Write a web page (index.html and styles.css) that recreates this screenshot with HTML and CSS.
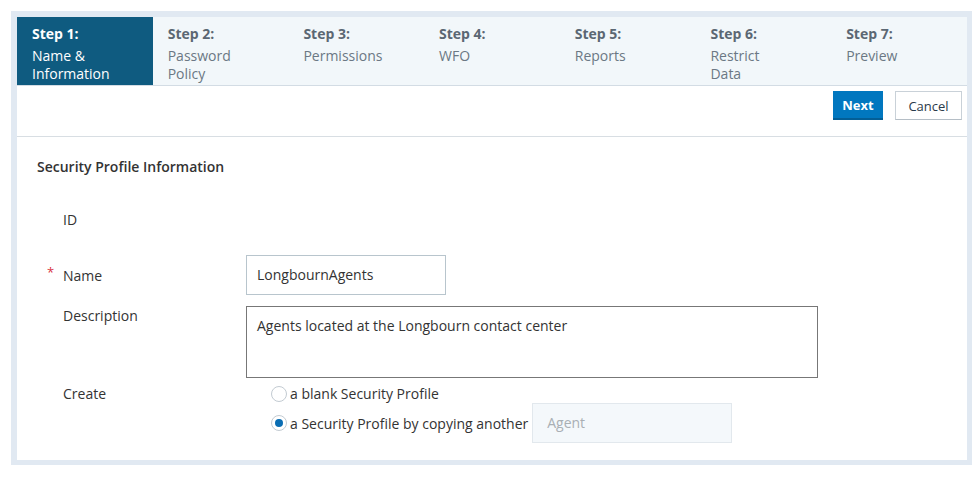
FILE: index.html
```html
<!DOCTYPE html>
<html>
<head>
<meta charset="utf-8">
<link rel="stylesheet" href="styles.css">
</head>
<body>
<div class="frame">
  <div class="steps">
    <div class="step active"><b>Step 1:</b><span>Name &amp; Information</span></div>
    <div class="step"><b>Step 2:</b><span>Password Policy</span></div>
    <div class="step"><b>Step 3:</b><span>Permissions</span></div>
    <div class="step"><b>Step 4:</b><span>WFO</span></div>
    <div class="step"><b>Step 5:</b><span>Reports</span></div>
    <div class="step"><b>Step 6:</b><span>Restrict Data</span></div>
    <div class="step"><b>Step 7:</b><span>Preview</span></div>
  </div>
  <div class="actions">
    <button class="btn primary">Next</button>
    <button class="btn">Cancel</button>
  </div>
  <div class="form">
    <h2 class="title">Security Profile Information</h2>
    <div class="row row-id"><div class="label">ID</div><div class="field"></div></div>
    <div class="row row-name"><div class="label"><span class="req">*</span>Name</div><div class="field"><div class="input">LongbournAgents</div></div></div>
    <div class="row row-desc"><div class="label">Description</div><div class="field"><div class="textarea">Agents located at the Longbourn contact center</div></div></div>
    <div class="row row-create"><div class="label">Create</div>
      <div class="field options">
        <div class="opt"><span class="radio"></span>a blank Security Profile</div>
        <div class="opt"><span class="radio on"></span>a Security Profile by copying another<div class="input disabled">Agent</div></div>
      </div>
    </div>
  </div>
</div>
</body>
</html>
```
FILE: styles.css
```css
* { box-sizing: border-box; }
html, body { margin: 0; padding: 0; background: #fff; }
body { padding: 11px 0 0 11px; font-family: "Open Sans", "Noto Sans", sans-serif; font-size: 14px; color: #333; }
.frame { width: 961px; height: 454px; border: 6px solid #e1e9f2; border-right-width: 5px; border-bottom-width: 5px; background: #fff; }
.steps { display: flex; height: 69px; background: #f2f7fa; border-bottom: 1px solid #d3dce4; }
.step { width: 135.7px; padding: 8px 41px 0 15px; display: flex; flex-direction: column; color: #6b7884; line-height: 18px; }
.step b { color: #5b6773; font-weight: 700; margin-bottom: 4px; }
.step span { font-weight: 400; }
.step.active { background: #0f5b80; color: #fff; }
.step.active b { color: #fff; }
.actions { height: 51px; border-bottom: 1px solid #d8dee3; display: flex; justify-content: flex-end; align-items: flex-start; padding: 5px 5px 0 0; gap: 12px; }
.btn { font-family: "Open Sans", "Noto Sans", sans-serif; font-size: 13px; height: 29px; width: 67px; padding: 0; background: #fff; border: 1px solid #c9d1d8; border-bottom-color: #b5bec6; color: #2a3a4a; cursor: pointer; }
.btn.primary { background: #0177bf; border: none; border-bottom: 2px solid #035e96; color: #fff; font-weight: 700; width: 50px; }
.form { padding: 0 20px; }
.title { margin: 0; padding-top: 20px; font-size: 14px; font-weight: 600; color: #333; line-height: 19px; height: 69px; }
.row { display: grid; grid-template-columns: 209px 1fr; }
.label { padding-left: 26px; position: relative; line-height: 19px; }
.req { position: absolute; left: 10px; top: 11px; color: #d9333f; font-size: 13px; line-height: 13px; }
.row-id { height: 49px; }
.row-id .label { padding-top: 4px; }
.row-name { height: 51px; }
.row-name .label { padding-top: 11px; }
.input { width: 200px; height: 40px; border: 1px solid #b8c5cd; padding: 0 10px; line-height: 38px; }
.row-desc { height: 78px; }
.row-desc .label { padding-top: 0; }
.textarea { width: 572px; height: 72px; border: 1px solid #777; padding: 9px 10px; line-height: 19px; }
.options { padding-left: 25px; display: flex; flex-direction: column; }
.row-create .label { padding-top: 0; }
.opt { display: flex; align-items: center; height: 19px; line-height: 19px; }
.opt:last-child { height: 40px; }
.radio { width: 16px; height: 16px; border-radius: 50%; border: 1px solid #c3cbd2; background: #fff; margin-right: 3px; position: relative; flex: none; }
.radio.on::after { content: ""; position: absolute; left: 3px; top: 3px; width: 8px; height: 8px; border-radius: 50%; background: #0a6db3; }
.input.disabled { margin-left: 4px; background: #f4f8fb; border-color: #e2e8ed; color: #a9afb4; padding: 0 14px; }
```
